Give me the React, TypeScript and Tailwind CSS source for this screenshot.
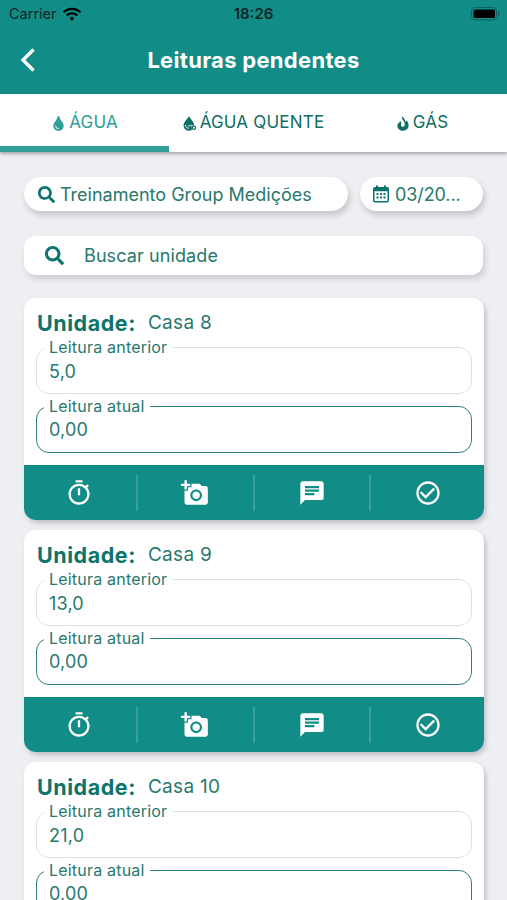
import React from "react";
import { FunctionComponent } from "react";
import { FaSearch, FaTint, FaWifi } from "react-icons/fa";
import {
  MdAddAPhoto,
  MdChat,
  MdCheckCircleOutline,
  MdOutlineTimer,
} from "react-icons/md";

interface Reading {
  unit: string;
  previous: string;
  current: string;
}

interface FieldProps {
  label: string;
  value: string;
  active?: boolean;
}

const readings: Reading[] = [
  { unit: "Casa 8", previous: "5,0", current: "0,00" },
  { unit: "Casa 9", previous: "13,0", current: "0,00" },
  { unit: "Casa 10", previous: "21,0", current: "0,00" },
];

const BackIcon: FunctionComponent = () => (
  <svg viewBox="0 0 16 26" className="h-[26px] w-4" fill="none">
    <path d="M13.500 2.500 3 13l10.500 10.500" stroke="currentColor" strokeWidth="3.400" />
  </svg>
);

const HotWaterIcon: FunctionComponent = () => (
  <svg viewBox="0 0 14 16" className="h-4 w-3.5" fill="none">
    <path d="M6 .8C5 4 .6 6.600.6 10.400a5.300 5.300 0 0 0 10.600 0C11.200 6.600 7 4 6 .8Z" fill="currentColor" />
    <path d="M2.400 10.400c.4 2.200 1.600 2.800 3.200 2.800" stroke="white" strokeWidth=".9" strokeLinecap="round" />
    <path d="M5 10.800c1.400 1 2.400-1.200 3.800-.6" stroke="white" strokeWidth=".8" strokeLinecap="round" />
    <circle cx="11" cy="12.800" r="2.600" fill="white" />
    <circle cx="11" cy="12.800" r="1.600" stroke="currentColor" strokeWidth="1.200" />
    <path d="m7 14.600 2.600-2.200" stroke="currentColor" strokeWidth="1.200" />
  </svg>
);

const FlameIcon: FunctionComponent = () => (
  <svg viewBox="0 0 12 15" className="h-[15px] w-3" fill="currentColor">
    <path d="M5 .3c-.5 2.200.7 3.400 1.600 4.700.9 1.400 1.300 2.700 1.100 3.900-.2 1.200-.9 1.800-1.900 1.800-1.100 0-1.800-.8-1.800-1.800 0-1.300.6-2 .2-3.700C1.800 6.200.4 7.900.4 9.700c0 2.900 2.400 5 5.500 5s5.700-2.100 5.700-5.200c0-2.100-1-3.800-2.200-5.200-.1.900-.4 1.400-.9 1.800C8.100 3.700 6.900 1.800 5 .3Z" />
  </svg>
);

const CalendarIcon: FunctionComponent = () => (
  <svg viewBox="0 0 16 18" className="h-[18px] w-4 text-[#0b746c]" fill="currentColor">
    <path
      fillRule="evenodd"
      d="M3 .5h2V2h6V.5h2V2h1a2 2 0 0 1 2 2v11.500a2 2 0 0 1-2 2H2a2 2 0 0 1-2-2V4a2 2 0 0 1 2-2h1V.5ZM1.500 6.200v9.300c0 .3.200.5.500.5h12c.3 0 .5-.2.5-.5V6.200h-13Z"
    />
    <path d="M3.500 8h2v2h-2zM7 8h2v2H7zM10.500 8h2v2h-2zM3.500 11.500h2v2h-2zM7 11.500h2v2H7zM10.500 11.500h2v2h-2z" />
  </svg>
);

const Field: FunctionComponent<FieldProps> = ({ label, value, active }) => {
  return (
    <fieldset
      className={`h-[57px] rounded-[13px] border pl-[7px] ${
        active ? "border-[#2b817b]" : "border-[#e0e0e0]"
      }`}
    >
      <legend className="h-5 px-[5px] text-base leading-5 tracking-[0.2px]">{label}</legend>
      <p className={`pl-[5px] text-[18px] tracking-[0.2px] ${active ? "leading-7" : "leading-[30px]"}`}>
        {value}
      </p>
    </fieldset>
  );
};

const ReadingCard: FunctionComponent<{ reading: Reading }> = ({ reading }) => {
  return (
    <div className="h-[222px] shrink-0 overflow-hidden rounded-xl bg-white shadow-[2px_3px_5px_rgba(0,0,0,0.2)]">
      <div className="flex h-[167px] flex-col px-3 pt-[11px]">
        <h2 className="flex h-7 items-center pl-px">
          <span className="text-[21.500px] font-bold tracking-[0.55px] text-[#0b746c]">Unidade:</span>
          <span className="ml-3 pt-px text-[19px] tracking-[0.3px]">{reading.unit}</span>
        </h2>
        <div className="flex flex-col gap-0.5">
          <Field label="Leitura anterior" value={reading.previous} />
          <Field label="Leitura atual" value={reading.current} active />
        </div>
      </div>
      <div className="grid h-[55px] grid-cols-[114px_117px_116px_1fr] items-center divide-x-2 divide-[#399f99] bg-[#118c86] text-[28px] text-white">
        <button className="flex h-9 items-center justify-center pr-0.5"><MdOutlineTimer /></button>
        <button className="flex h-9 items-center justify-center pr-px"><MdAddAPhoto /></button>
        <button className="flex h-9 items-center justify-center"><MdChat /></button>
        <button className="flex h-9 items-center justify-center pl-px"><MdCheckCircleOutline /></button>
      </div>
    </div>
  );
};

const App: FunctionComponent = () => {
  return (
    <div className="flex h-[900px] w-[507px] flex-col overflow-hidden bg-[#eeeff3] font-['Inter',sans-serif] text-[#28786d]">
      <header className="h-[94px] shrink-0 bg-[#118c86]">
        <div className="grid h-7 grid-cols-3 items-center text-[14.500px] text-[#102523]">
          <div className="flex items-center gap-1.5 pl-[9px]">
            <span>Carrier</span>
            <FaWifi className="text-[18px] text-black" />
          </div>
          <span className="text-center text-[15px] font-semibold">18:26</span>
          <svg viewBox="0 0 30 14" className="mr-1.5 h-3.5 w-[30px] justify-self-end">
            <rect x=".5" y=".5" width="25" height="12.500" rx="3.500" fill="none" stroke="#0b625e" />
            <rect x="2.500" y="2.500" width="21.500" height="8.500" rx="1.500" fill="black" />
            <path d="M27 4.500c2 .5 2 4 0 4.500Z" fill="#0b625e" />
          </svg>
        </div>
        <div className="grid h-16 grid-cols-[80px_1fr_80px] items-center text-white">
          <button className="pl-5"><BackIcon /></button>
          <h1 className="text-center text-[22px] font-bold tracking-[0.3px]">Leituras pendentes</h1>
        </div>
      </header>

      <nav className="z-10 grid h-[58px] shrink-0 grid-cols-3 bg-white text-[17px] text-[#106e63] shadow-[0_2px_3px_rgba(0,0,0,0.3)]">
        <button className="flex items-center justify-center gap-[3px] border-b-[6px] border-[#2f9e97] pt-1.5 text-[#2f9e97]">
          <FaTint className="text-[15px]" />
          <span className="tracking-[0.2px]">ÁGUA</span>
        </button>
        <button className="flex items-center justify-center gap-[3px] border-b-[6px] border-transparent pt-1.5">
          <HotWaterIcon />
          <span className="tracking-[0.2px]">ÁGUA QUENTE</span>
        </button>
        <button className="flex items-center justify-center gap-1 border-b-[6px] border-transparent pt-1.5">
          <FlameIcon />
          <span className="tracking-[0.2px]">GÁS</span>
        </button>
      </nav>

      <main className="pt-[25px] pr-[23px] pl-6">
        <div className="flex gap-3 text-[18px]">
          <div className="flex h-[34px] w-[324px] items-center gap-[5px] rounded-full bg-white pl-3.5 shadow-[2px_4px_6px_rgba(0,0,0,0.18)]">
            <FaSearch className="text-[17px] text-[#0b746c]" />
            <span>Treinamento Group Medições</span>
          </div>
          <div className="flex h-[34px] w-[123px] items-center gap-1.5 rounded-full bg-white pl-[13px] shadow-[2px_4px_6px_rgba(0,0,0,0.18)]">
            <CalendarIcon />
            <span className="tracking-[-0.1px]">03/20...</span>
          </div>
        </div>
        <div className="mt-[25px] mr-px flex h-[39px] items-center rounded-xl bg-white pl-[21px] text-[18px] shadow-[2px_4px_6px_rgba(0,0,0,0.15)]">
          <FaSearch className="text-[19px] text-[#0b746c]" />
          <span className="ml-5 tracking-[0.1px]">Buscar unidade</span>
        </div>
        <div className="mt-[23px] flex flex-col gap-2.5">
          {readings.map((reading) => (
            <ReadingCard key={reading.unit} reading={reading} />
          ))}
        </div>
      </main>
    </div>
  );
};

export default App;
